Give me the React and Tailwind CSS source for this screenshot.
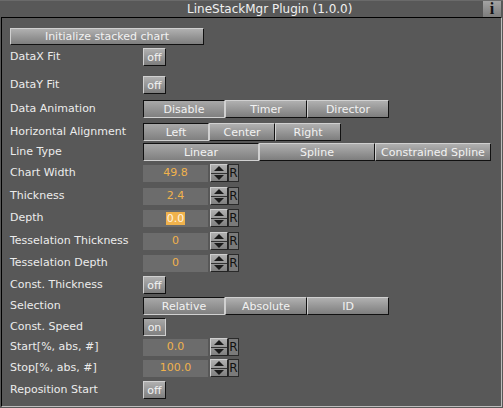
import React from "react";

const raised =
  "border border-t-[#d0d0d0] border-l-[#d0d0d0] border-b-[#111] border-r-[#111] bg-linear-to-b from-[#b0b0b0] to-[#7e7e7e]";
const pressed =
  "border border-t-[#111] border-l-[#111] border-b-[#d0d0d0] border-r-[#d0d0d0] bg-linear-to-b from-[#a8a8a8] to-[#808080]";

function Btn({ on, className = "", children }) {
  return (
    <div
      className={`${on ? pressed : raised} ${className} flex items-center justify-center text-[#f2f2f2] leading-none`}
    >
      {children}
    </div>
  );
}

function Label({ children }) {
  return <div className="w-[141px] pl-[8px] text-[#ececec] whitespace-nowrap">{children}</div>;
}

function Spinner() {
  return (
    <div className="ml-[2px] flex h-[18px]">
      <div className="w-[18px] h-[18px] flex flex-col border border-t-[#cfcfcf] border-l-[#cfcfcf] border-b-[#222] border-r-[#222] bg-linear-to-b from-[#b0b0b0] to-[#808080]">
        <div className="flex-1 flex items-center justify-center border-b border-[#333]">
          <svg width="10" height="5" viewBox="0 0 10 5"><path d="M0 5 L5 0 L10 5 Z" fill="#1a1a1a" /></svg>
        </div>
        <div className="flex-1 flex items-center justify-center">
          <svg width="10" height="5" viewBox="0 0 10 5"><path d="M0 0 L5 5 L10 0 Z" fill="#1a1a1a" /></svg>
        </div>
      </div>
      <div className="w-[11px] h-[18px] border border-[#2a2a2a] bg-[#7a7a7a] flex items-center justify-center text-[12px] text-[#111] leading-none">
        R
      </div>
    </div>
  );
}

function NumRow({ label, value, hl, className }) {
  return (
    <div className={`flex items-center h-[18px] ${className}`}>
      <Label>{label}</Label>
      <div className="w-[65px] h-[17px] bg-[#6c6c6c] flex items-center justify-center text-[#f0b24c]">
        {hl ? <span className="bg-[#f0b24c] text-[#fff4e0] px-[1px] leading-[13px]">{value}</span> : value}
      </div>
      <Spinner />
    </div>
  );
}

function ToggleRow({ label, value, on, className }) {
  return (
    <div className={`flex items-center h-[18px] ${className}`}>
      <Label>{label}</Label>
      <Btn on={on} className="w-[23px] h-[18px]">{value}</Btn>
    </div>
  );
}

export default function App() {
  return (
    <div className="w-[503px] h-[408px] bg-[#585858] font-['DejaVu_Sans',sans-serif] text-[11px] overflow-hidden flex flex-col border-t border-[#6a6a6a]">
      <div className="h-[16px] flex items-center relative">
        <div className="pl-[187px] text-[12px] text-[#f0f0f0] leading-none">LineStackMgr Plugin (1.0.0)</div>
        <div className="absolute right-[2px] top-[-1px] w-[18px] h-[17px] bg-linear-to-b from-[#a6a6a6] to-[#7c7c7c] flex items-center justify-center text-[#111] font-['Liberation_Serif',serif] text-[16px] font-bold leading-none">
          i
        </div>
      </div>
      <div className="ml-[1px] w-[501px] h-[390px] border-t border-l border-black border-r border-r-[#bdbdbd] border-b border-b-[#bdbdbd] flex flex-col">
        <div className="mt-[10px] ml-[8px]">
          <Btn className="w-[194px] h-[17px]">Initialize stacked chart</Btn>
        </div>
        <ToggleRow label="DataX Fit" value="off" className="mt-[3px]" />
        <ToggleRow label="DataY Fit" value="off" className="mt-[10px]" />
        <div className="flex items-center h-[18px] mt-[6px]">
          <Label>Data Animation</Label>
          <Btn on className="w-[82px] h-[18px]">Disable</Btn>
          <Btn className="w-[82px] h-[18px]">Timer</Btn>
          <Btn className="w-[82px] h-[18px]">Director</Btn>
        </div>
        <div className="flex items-center h-[18px] mt-[5px]">
          <Label>Horizontal Alignment</Label>
          <Btn on className="w-[66px] h-[18px]">Left</Btn>
          <Btn className="w-[66px] h-[18px]">Center</Btn>
          <Btn className="w-[66px] h-[18px]">Right</Btn>
        </div>
        <div className="flex items-center h-[18px] mt-[2px]">
          <Label>Line Type</Label>
          <Btn on className="w-[116px] h-[18px]">Linear</Btn>
          <Btn className="w-[116px] h-[18px]">Spline</Btn>
          <Btn className="w-[116px] h-[18px]">Constrained Spline</Btn>
        </div>
        <NumRow label="Chart Width" value="49.8" className="mt-[3px]" />
        <NumRow label="Thickness" value="2.4" className="mt-[5px]" />
        <NumRow label="Depth" value="0.0" hl className="mt-[4px]" />
        <NumRow label="Tesselation Thickness" value="0" className="mt-[5px]" />
        <NumRow label="Tesselation Depth" value="0" className="mt-[4px]" />
        <ToggleRow label="Const. Thickness" value="off" className="mt-[4px]" />
        <div className="flex items-center h-[18px] mt-[3px]">
          <Label>Selection</Label>
          <Btn on className="w-[82px] h-[18px]">Relative</Btn>
          <Btn className="w-[82px] h-[18px]">Absolute</Btn>
          <Btn className="w-[82px] h-[18px]">ID</Btn>
        </div>
        <ToggleRow label="Const. Speed" value="on" on className="mt-[3px]" />
        <NumRow label="Start[%, abs, #]" value="0.0" className="mt-[2px]" />
        <NumRow label="Stop[%, abs, #]" value="100.0" className="mt-[3px]" />
        <ToggleRow label="Reposition Start" value="off" className="mt-[4px]" />
      </div>
    </div>
  );
}
